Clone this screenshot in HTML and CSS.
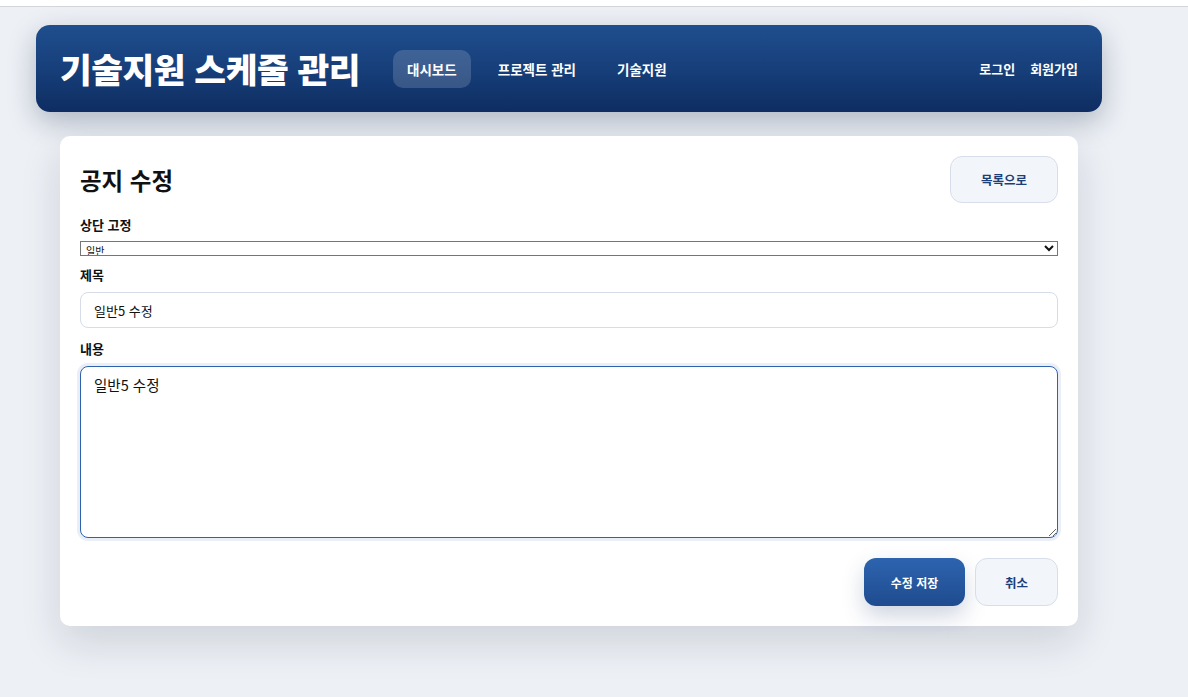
FILE: index.html
```html
<!DOCTYPE html>
<html lang="ko">
<head>
<meta charset="utf-8">
<title>공지 수정</title>
<link rel="stylesheet" href="styles.css">
</head>
<body>
<div class="topstrip"></div>
<div class="page">
  <header class="appbar">
    <h1 class="brand">기술지원 스케줄 관리</h1>
    <nav class="nav">
      <a class="nav-item active">대시보드</a>
      <a class="nav-item">프로젝트 관리</a>
      <a class="nav-item">기술지원</a>
    </nav>
    <div class="auth">
      <a class="auth-link">로그인</a>
      <a class="auth-link">회원가입</a>
    </div>
  </header>

  <main class="card">
    <div class="card-head">
      <h2 class="card-title">공지 수정</h2>
      <button class="btn btn-light btn-list">목록으로</button>
    </div>
    <div class="field field-select">
      <label class="label label-select">상단 고정</label>
      <select class="select"><option>일반</option><option>고정</option></select>
    </div>
    <div class="field">
      <label class="label">제목</label>
      <input class="input" type="text" value="일반5 수정">
    </div>
    <div class="field field-last">
      <label class="label">내용</label>
      <textarea class="textarea">일반5 수정</textarea>
    </div>
    <div class="actions">
      <button class="btn btn-primary">수정 저장</button>
      <button class="btn btn-light btn-cancel">취소</button>
    </div>
  </main>
</div>
</body>
</html>
```

FILE: styles.css
```css
* { box-sizing: border-box; }
html, body {
  margin: 0;
  padding: 0;
  background: #edf0f5;
  font-family: "Noto Sans CJK KR", "Noto Sans", sans-serif;
  color: #111;
}
body {
  min-height: 697px;
}
.topstrip {
  height: 7px;
  background: #fff;
  border-bottom: 1px solid #d4d6da;
}
.page {
  width: 1066px;
  margin-left: 36px;
  padding-top: 18px;
  padding-bottom: 60px;
}
.appbar {
  height: 87px;
  border-radius: 14px;
  background: linear-gradient(180deg, #1f4e8e 0%, #173f7a 50%, #0e2d62 100%);
  box-shadow: 0 10px 28px rgba(15, 35, 70, 0.28);
  display: flex;
  align-items: center;
  padding: 0 24px;
  color: #fff;
}
.brand {
  margin: 0;
  font-size: 34.5px;
  font-weight: 800;
  letter-spacing: -0.45px;
  line-height: 1;
  color: #fff;
}
.nav {
  display: flex;
  align-items: center;
  gap: 13px;
  margin-left: 33px;
}
.nav-item {
  display: block;
  height: 38px;
  line-height: 38px;
  padding: 0 14px;
  border-radius: 10px;
  font-size: 13.5px;
  font-weight: 700;
  color: #fff;
}
.nav-item.active {
  background: rgba(255, 255, 255, 0.16);
}
.auth {
  margin-left: auto;
  display: flex;
  gap: 15px;
}
.auth-link {
  font-size: 13px;
  font-weight: 700;
  color: #fff;
}
.card {
  margin: 24px 24px 0 24px;
  background: #fff;
  border-radius: 10px;
  padding: 20px;
  box-shadow: 0 16px 40px rgba(20, 35, 60, 0.14);
}
.card-head {
  display: flex;
  align-items: center;
  justify-content: space-between;
  margin-bottom: 14px;
}
.card-title {
  margin: 0;
  font-size: 23.5px;
  font-weight: 700;
  color: #111;
}
.btn {
  font-family: inherit;
  font-size: 12.5px;
  font-weight: 700;
  border-radius: 12px;
  cursor: pointer;
}
.btn-light {
  background: #f2f5fa;
  border: 1px solid #d7deea;
  color: #1c3f78;
}
.btn-list {
  width: 108px;
  height: 47px;
}
.field {
  margin-bottom: 13px;
}
.field-select {
  margin-bottom: 11px;
}
.field-last {
  margin-bottom: 0;
}
.label {
  display: block;
  font-size: 13px;
  font-weight: 700;
  line-height: 16px;
  margin-bottom: 9px;
  color: #111;
}
.label-select {
  margin-bottom: 8px;
}
.select {
  display: block;
  width: 100%;
  height: 15px;
  padding: 0 1px;
  font-family: inherit;
  font-size: 10px;
  line-height: 13px;
  border: 1px solid #767676;
  border-radius: 0;
  background: #fff;
  color: #111;
}
.input {
  display: block;
  width: 100%;
  height: 36px;
  padding: 0 13px;
  border: 1px solid #d6dce8;
  border-radius: 8px;
  font-family: inherit;
  font-size: 13px;
  color: #111;
  background: #fff;
  outline: none;
}
.textarea {
  display: block;
  width: 100%;
  height: 172px;
  padding: 7px 13px;
  border: 1px solid #2d62ad;
  border-radius: 8px;
  box-shadow: 0 0 0 3px rgba(45, 98, 173, 0.1);
  font-family: inherit;
  font-size: 14.5px;
  color: #111;
  background: #fff;
  outline: none;
  resize: vertical;
}
.actions {
  display: flex;
  justify-content: flex-end;
  gap: 10px;
  padding-top: 20px;
}
.btn-primary {
  width: 101px;
  height: 48px;
  border: none;
  color: #fff;
  font-size: 12px;
  background: linear-gradient(180deg, #2d64af 0%, #1f4b8f 100%);
  box-shadow: 0 10px 22px rgba(30, 60, 110, 0.22);
}
.btn-cancel {
  width: 83px;
  height: 48px;
}
```
